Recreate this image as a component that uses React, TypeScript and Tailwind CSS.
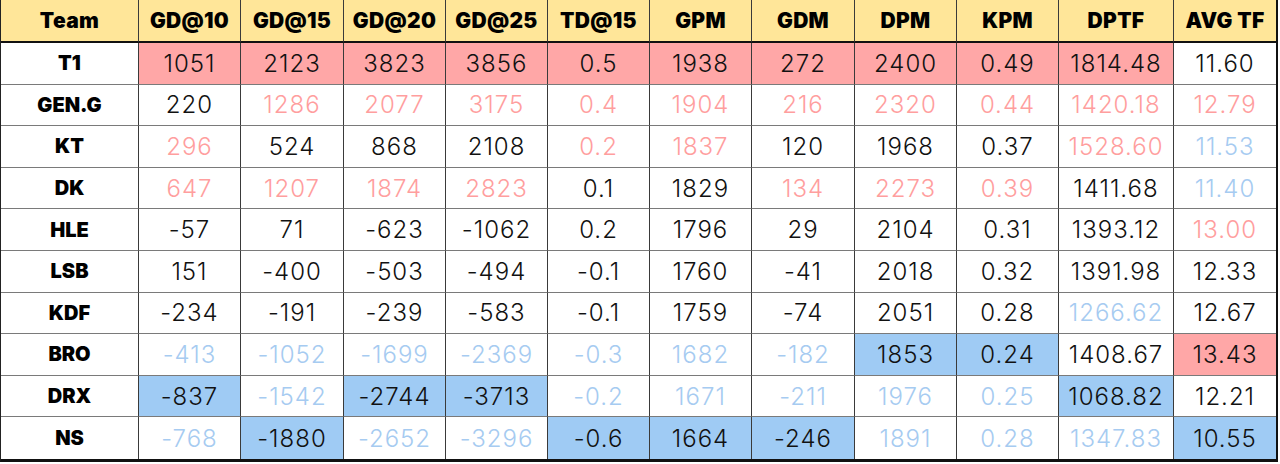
import React from "react";

type S = "p" | "R" | "B" | "rt" | "bt";

const headers = ["Team", "GD@10", "GD@15", "GD@20", "GD@25", "TD@15", "GPM", "GDM", "DPM", "KPM", "DPTF", "AVG TF"];

const rows: [string, [string, S][]][] = [
  ["T1", [["1051", "R"], ["2123", "R"], ["3823", "R"], ["3856", "R"], ["0.5", "R"], ["1938", "R"], ["272", "R"], ["2400", "R"], ["0.49", "R"], ["1814.48", "R"], ["11.60", "p"]]],
  ["GEN.G", [["220", "p"], ["1286", "rt"], ["2077", "rt"], ["3175", "rt"], ["0.4", "rt"], ["1904", "rt"], ["216", "rt"], ["2320", "rt"], ["0.44", "rt"], ["1420.18", "rt"], ["12.79", "rt"]]],
  ["KT", [["296", "rt"], ["524", "p"], ["868", "p"], ["2108", "p"], ["0.2", "rt"], ["1837", "rt"], ["120", "p"], ["1968", "p"], ["0.37", "p"], ["1528.60", "rt"], ["11.53", "bt"]]],
  ["DK", [["647", "rt"], ["1207", "rt"], ["1874", "rt"], ["2823", "rt"], ["0.1", "p"], ["1829", "p"], ["134", "rt"], ["2273", "rt"], ["0.39", "rt"], ["1411.68", "p"], ["11.40", "bt"]]],
  ["HLE", [["-57", "p"], ["71", "p"], ["-623", "p"], ["-1062", "p"], ["0.2", "p"], ["1796", "p"], ["29", "p"], ["2104", "p"], ["0.31", "p"], ["1393.12", "p"], ["13.00", "rt"]]],
  ["LSB", [["151", "p"], ["-400", "p"], ["-503", "p"], ["-494", "p"], ["-0.1", "p"], ["1760", "p"], ["-41", "p"], ["2018", "p"], ["0.32", "p"], ["1391.98", "p"], ["12.33", "p"]]],
  ["KDF", [["-234", "p"], ["-191", "p"], ["-239", "p"], ["-583", "p"], ["-0.1", "p"], ["1759", "p"], ["-74", "p"], ["2051", "p"], ["0.28", "p"], ["1266.62", "bt"], ["12.67", "p"]]],
  ["BRO", [["-413", "bt"], ["-1052", "bt"], ["-1699", "bt"], ["-2369", "bt"], ["-0.3", "bt"], ["1682", "bt"], ["-182", "bt"], ["1853", "B"], ["0.24", "B"], ["1408.67", "p"], ["13.43", "R"]]],
  ["DRX", [["-837", "B"], ["-1542", "bt"], ["-2744", "B"], ["-3713", "B"], ["-0.2", "bt"], ["1671", "bt"], ["-211", "bt"], ["1976", "bt"], ["0.25", "bt"], ["1068.82", "B"], ["12.21", "p"]]],
  ["NS", [["-768", "bt"], ["-1880", "B"], ["-2652", "bt"], ["-3296", "bt"], ["-0.6", "B"], ["1664", "B"], ["-246", "B"], ["1891", "bt"], ["0.28", "bt"], ["1347.83", "bt"], ["10.55", "B"]]],
];

const styleFor: Record<S, string> = {
  p: "bg-white text-[#111111]",
  R: "bg-[#ffa7a7] text-[#111111]",
  B: "bg-[#9fcbf4] text-[#111111]",
  rt: "bg-white text-[#ff9e9e]",
  bt: "bg-white text-[#a6cbf1]",
};

export default function App() {
  return (
    <div className="w-[1280px] h-[464px] bg-white">
      <div
        className="w-[1278px] grid grid-cols-[138px_102px_103px_102px_102px_102px_102px_103px_102px_102px_115px_102px] grid-rows-[43px_repeat(10,41.6px)] border-l border-l-[#222222] border-r-2 border-r-[#111111] border-b-[3px] border-b-[#111111]"
        style={{ fontFamily: 'Inter, "Noto Sans", sans-serif' }}
      >
        {headers.map((h, i) => (
          <div
            key={h}
            className={`flex items-center justify-center bg-[#ffe699] text-[21px] font-black tracking-[0.3px] text-black border-b-2 border-b-[#111111] ${i < headers.length - 1 ? "border-r border-r-[#3a3a3a]" : ""}`}
          >
            {h}
          </div>
        ))}
        {rows.map(([team, cells], ri) => {
          const last = ri === rows.length - 1;
          return (
            <React.Fragment key={team}>
              <div
                className={`flex items-center justify-center bg-white text-[20px] font-black text-black border-r border-r-[#3a3a3a] ${last ? "" : "border-b border-b-[#7a7a7a]"}`}
              >
                {team}
              </div>
              {cells.map(([v, s], ci) => (
                <div
                  key={ci}
                  className={`flex items-center justify-center pt-px text-[24px] font-light tracking-[1px] ${styleFor[s]} ${ci < cells.length - 1 ? "border-r border-r-[#3a3a3a]" : ""} ${last ? "" : "border-b border-b-[#7a7a7a]"}`}
                >
                  {v}
                </div>
              ))}
            </React.Fragment>
          );
        })}
      </div>
    </div>
  );
}
